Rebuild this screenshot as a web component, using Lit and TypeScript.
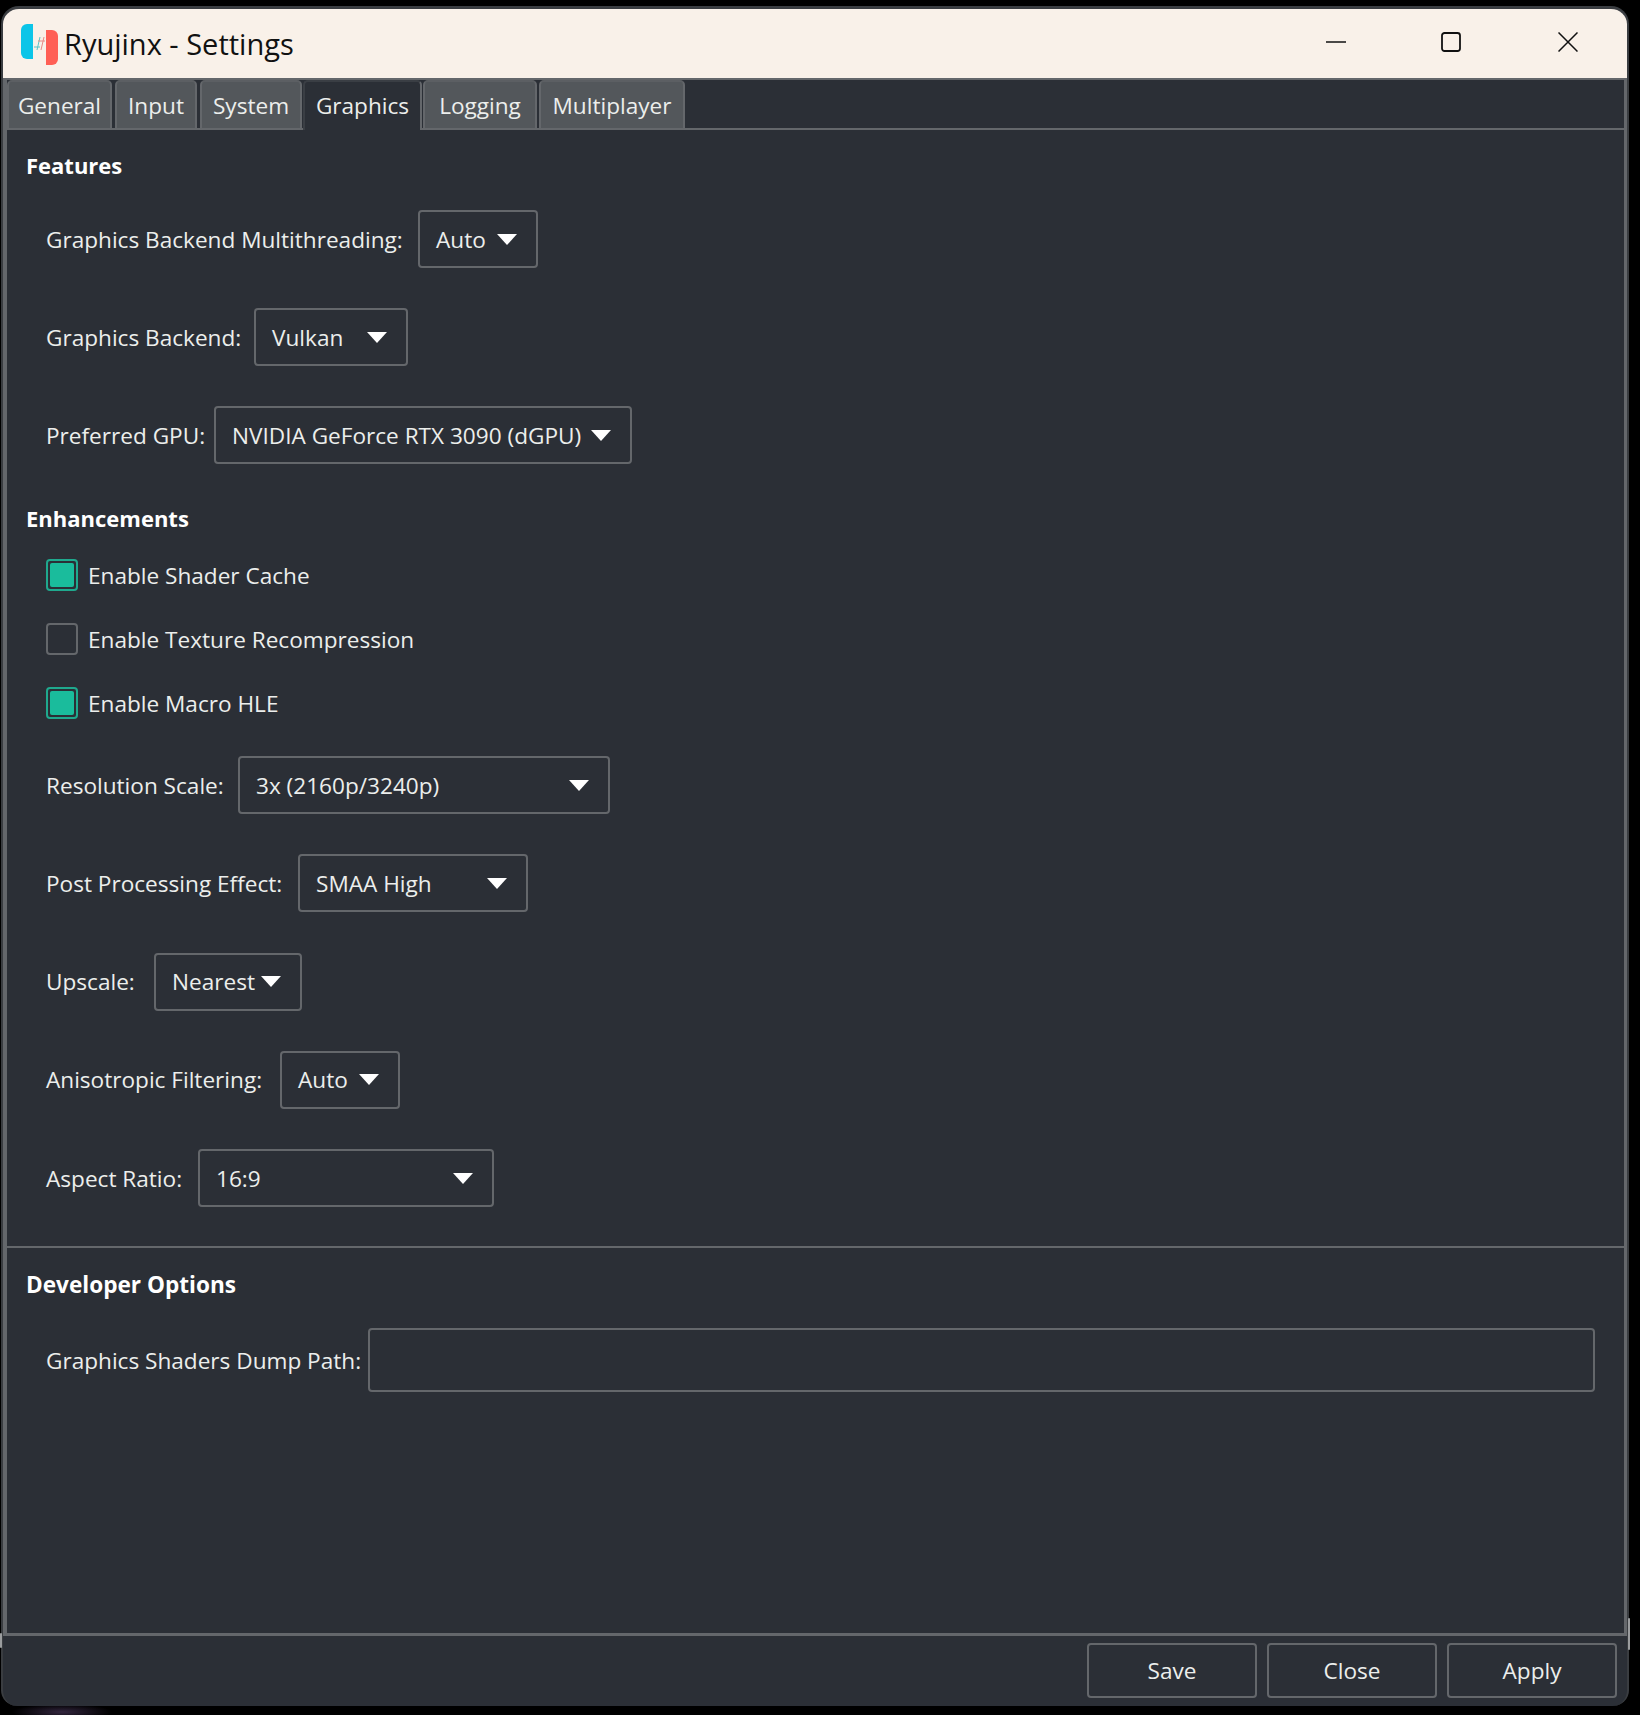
import { LitElement, html, css } from "lit";
import { customElement } from "lit/decorators.js";

const TABS = [
  { t: "General", w: 105, m: 0 },
  { t: "Input", w: 82, m: 3 },
  { t: "System", w: 102, m: 3 },
  { t: "Graphics", w: 119, m: 1, active: true },
  { t: "Logging", w: 114, m: 1 },
  { t: "Multiplayer", w: 146, m: 2 },
];

@customElement("app-root")
export class AppRoot extends LitElement {
  static styles = css`
    :host {
      display: block;
      position: relative;
      width: 1640px;
      height: 1715px;
      box-sizing: border-box;
      padding: 6px 11px 9px 1px;
      background: radial-gradient(ellipse 50px 8px at 62px 1712px, #33263f 0%, transparent 100%), #000;
      font-family: "Open Sans", "Noto Sans", sans-serif;
      font-size: 22.6px;
      color: #eceeec;
    }
    * { box-sizing: border-box; }
    .window {
      height: 100%;
      display: flex;
      flex-direction: column;
      background: #2b2f36;
      border: 2px solid #3a3d41;
      border-top-width: 3px;
      border-bottom: 0;
      border-radius: 18px 18px 16px 16px;
      overflow: hidden;
    }
    .titlebar {
      height: 69px;
      flex: none;
      display: flex;
      align-items: center;
      background: #f9f1e9;
      color: #111;
      padding-left: 17px;
      font-size: 29px;
    }
    .logo { width: 38px; height: 42px; flex: none; }
    .title { margin-left: 6px; flex: 1; }
    .ctl { width: 20px; height: 20px; display: block; margin-bottom: 4px; }
    .ctl.min { margin-right: 95px; }
    .ctl.max { margin-right: 97px; }
    .ctl.cls { margin-right: 49px; }
    .panel {
      flex: 1;
      min-height: 0;
      display: flex;
      flex-direction: column;
      border-top: 2px solid #64676b;
      border-left: 4px solid #64676b;
      border-right: 3px solid #64676b;
    }
    .tabs {
      height: 50px;
      flex: none;
      display: flex;
      border-bottom: 2px solid #64676b;
    }
    .tab {
      background: #53575b;
      border: 2px solid #64676b;
      border-bottom: 0;
      border-top-color: #5c5f63;
      border-radius: 5px 5px 0 0;
      display: flex;
      align-items: center;
      justify-content: center;
      height: 48px;
    }
    .tab.active {
      background: #2b2f36;
      border-color: #3a3e44;
      border-right-color: #64676b;
      height: 50px;
      padding-bottom: 2px;
      position: relative;
      z-index: 1;
    }
    .content {
      flex: 1;
      display: flex;
      flex-direction: column;
      padding: 19px 0 0 0;
    }
    .h {
      height: 32px;
      line-height: 32px;
      font-weight: 700;
      color: #fff;
      margin-left: 19px;
      font-size: 22px;
    }
    .h.en { margin-top: 38px; }
    .row {
      display: flex;
      align-items: center;
      gap: 14px;
      margin-left: 39px;
      height: 58px;
      margin-top: 40px;
    }
    .row.first { margin-top: 29px; }
    .row.low { margin-top: 40.25px; }
    .row.afterchk { margin-top: 37px; }
    .label { flex: none; white-space: nowrap; }
    .select {
      height: 58px;
      flex: none;
      border: 2px solid #64676b;
      border-radius: 4px;
      padding: 0 19px 0 16px;
      display: flex;
      align-items: center;
      justify-content: space-between;
    }
    .arrow {
      width: 0;
      height: 0;
      flex: none;
      border-left: 10px solid transparent;
      border-right: 10px solid transparent;
      border-top: 11px solid #fff;
    }
    .check {
      display: flex;
      align-items: center;
      height: 32px;
      gap: 10px;
      margin-left: 39px;
      margin-top: 32px;
    }
    .check.first { margin-top: 25px; }
    .box {
      width: 32px;
      height: 32px;
      flex: none;
      border: 2px solid #64676b;
      border-radius: 4px;
      padding: 2px;
    }
    .box.on { border-color: #1fa98e; }
    .box.on::before {
      content: "";
      display: block;
      width: 100%;
      height: 100%;
      background: #1abc9c;
      border-radius: 2px;
    }
    .sep { height: 2px; flex: none; background: #64676b; margin-top: 39px; }
    .h.dev { margin-top: 21px; font-size: 22.6px; }
    .row.path { height: 64px; margin-top: 27px; gap: 10px; padding-right: 29px; }
    .input {
      flex: 1;
      height: 64px;
      border: 2px solid #64676b;
      border-radius: 4px;
    }
    .footer {
      flex: none;
      height: 73px;
      border-top: 3px solid #64676b;
      display: flex;
      justify-content: flex-end;
      gap: 10px;
      padding: 7px 10px 0 0;
    }
    .btn {
      width: 170px;
      height: 55px;
      border: 2px solid #64676b;
      border-radius: 4px;
      display: flex;
      align-items: center;
      justify-content: center;
    }
    .grip {
      position: absolute;
      background: #9a9c9e;
      border-radius: 2px;
    }
    .grip.l { left: 0; top: 1633px; width: 2px; height: 15px; }
    .grip.r { left: 1628px; top: 1618px; width: 2px; height: 32px; }
  `;

  private sel(label: string, labelW: number, value: string, width: number, cls = "") {
    return html`<div class="row ${cls}">
      <span class="label" style="width:${labelW}px">${label}</span>
      <div class="select" style="width:${width}px"><span>${value}</span><i class="arrow"></i></div>
    </div>`;
  }

  private chk(label: string, on: boolean, cls = "") {
    return html`<div class="check ${cls}"><div class="box ${on ? "on" : ""}"></div><span>${label}</span></div>`;
  }

  render() {
    return html`<div class="window">
        <div class="titlebar">
          <svg class="logo" viewBox="0 0 38 42">
            <path d="M13 1H7a6 6 0 0 0-6 6v23a6 6 0 0 0 6 6h6z" fill="#0cc5e8" />
            <path d="M26 7h6a6 6 0 0 1 6 6v23a6 6 0 0 1-6 6h-6z" fill="#ff5f55" />
            <g fill="none" stroke-width="1">
              <path d="M20 14l-3 13M14 24h6" stroke="#5bc4c8" />
              <path d="M24 14l-3 13M18 18h7" stroke="#e88a86" />
            </g>
          </svg>
          <span class="title">Ryujinx - Settings</span>
          <svg class="ctl min" viewBox="0 0 20 20"><path d="M0 10h20" stroke="#111" stroke-width="1.6" /></svg>
          <svg class="ctl max" viewBox="0 0 20 20"><rect x="1" y="1" width="18" height="18" rx="2.5" fill="none" stroke="#111" stroke-width="1.8" /></svg>
          <svg class="ctl cls" viewBox="0 0 20 20"><path d="M0.5 0.5l19 19M19.5 0.5l-19 19" stroke="#111" stroke-width="1.5" /></svg>
        </div>
        <div class="panel">
          <div class="tabs">
            ${TABS.map(
              (t) => html`<div class="tab ${t.active ? "active" : ""}" style="width:${t.w}px;margin-left:${t.m}px">${t.t}</div>`
            )}
          </div>
          <div class="content">
            <div class="h">Features</div>
            ${this.sel("Graphics Backend Multithreading:", 358, "Auto", 120, "first")}
            ${this.sel("Graphics Backend:", 194, "Vulkan", 154)}
            ${this.sel("Preferred GPU:", 154, "NVIDIA GeForce RTX 3090 (dGPU)", 418)}
            <div class="h en">Enhancements</div>
            ${this.chk("Enable Shader Cache", true, "first")}
            ${this.chk("Enable Texture Recompression", false)}
            ${this.chk("Enable Macro HLE", true)}
            ${this.sel("Resolution Scale:", 178, "3x (2160p/3240p)", 372, "afterchk")}
            ${this.sel("Post Processing Effect:", 238, "SMAA High", 230, "low")}
            ${this.sel("Upscale:", 94, "Nearest", 148, "low")}
            ${this.sel("Anisotropic Filtering:", 220, "Auto", 120, "low")}
            ${this.sel("Aspect Ratio:", 138, "16:9", 296, "low")}
            <div class="sep"></div>
            <div class="h dev">Developer Options</div>
            <div class="row path"><span class="label" style="width:312px">Graphics Shaders Dump Path:</span><div class="input"></div></div>
          </div>
        </div>
        <div class="footer">
          <div class="btn">Save</div>
          <div class="btn">Close</div>
          <div class="btn">Apply</div>
        </div>
      </div>
      <i class="grip l"></i><i class="grip r"></i>`;
  }
}
